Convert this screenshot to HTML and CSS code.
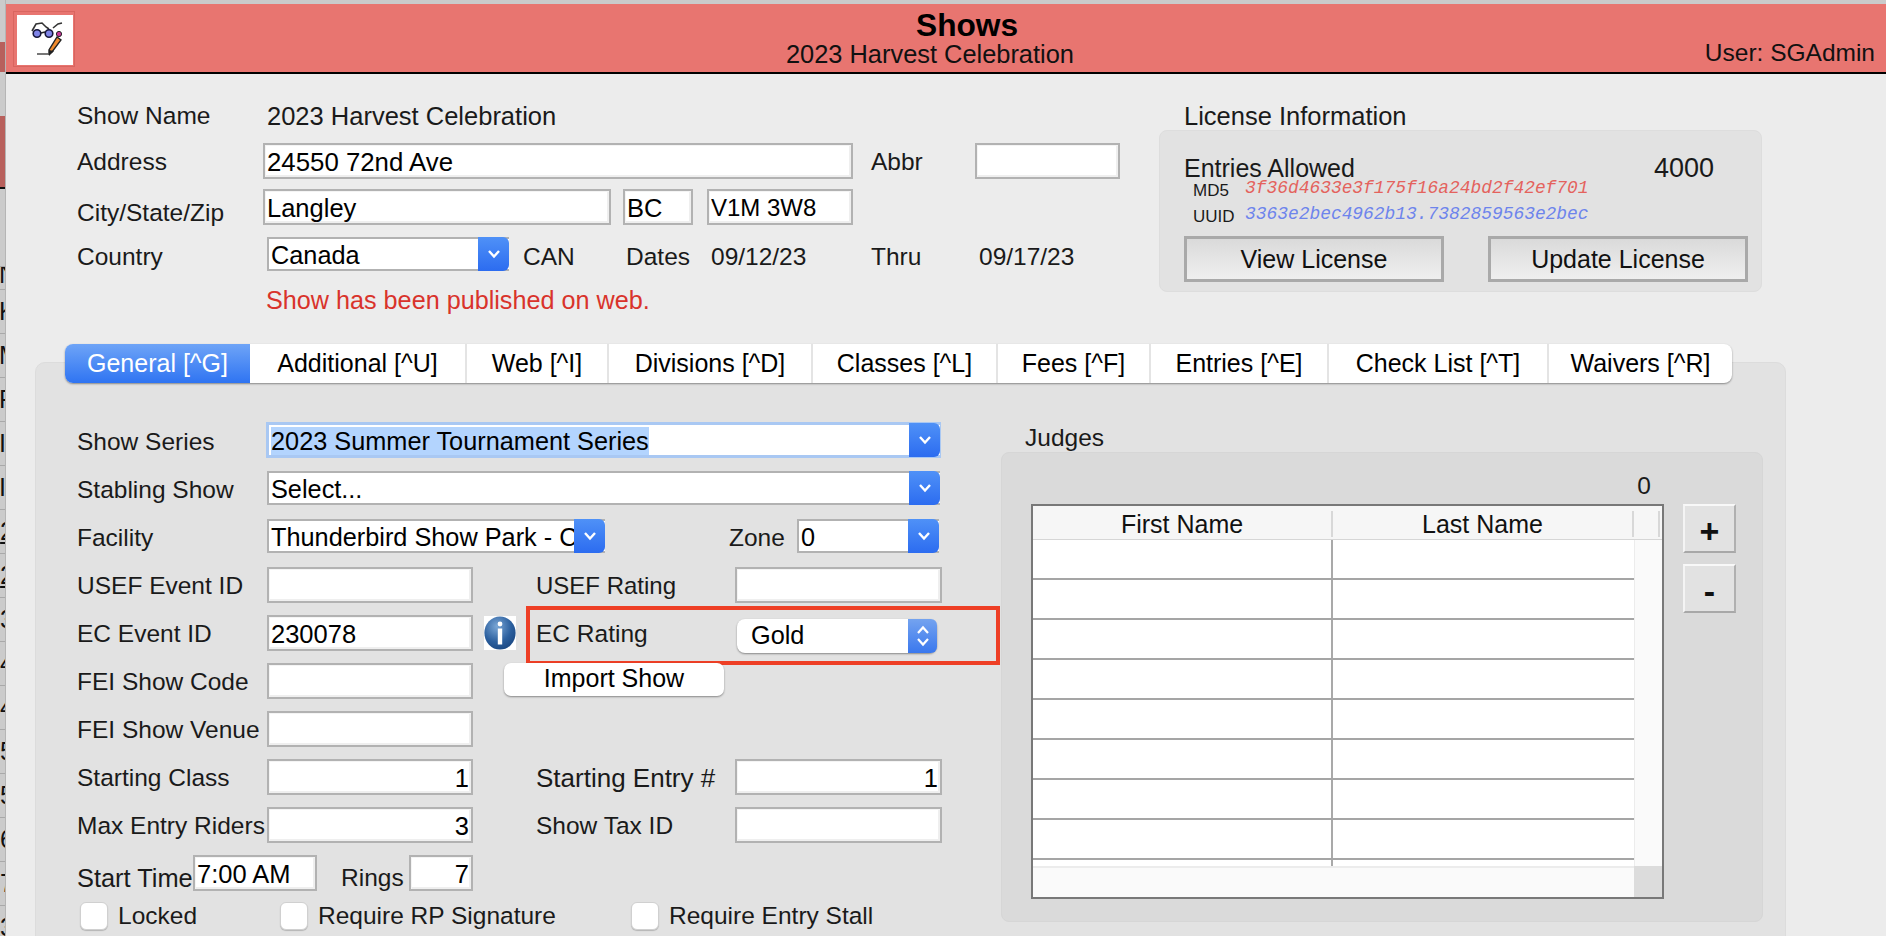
FILE: index.html
```html
<!DOCTYPE html>
<html>

<head>
    <meta charset="utf-8">
    <title>Shows</title>
    <link rel="stylesheet" href="styles.css">
</head>

<body>
    <!-- sliver of the spreadsheet window behind -->
    <div class="behind">
        <div class="behind-band band-a"></div>
        <div class="behind-band band-b"></div>
        <div class="behind-row first letter"><span>N</span></div>
        <div class="behind-row letter"><span>K</span></div>
        <div class="behind-row letter"><span>M</span></div>
        <div class="behind-row letter"><span>F</span></div>
        <div class="behind-row letter"><span>I</span></div>
        <div class="behind-row letter"><span>I</span></div>
        <div class="behind-row"><span class="under">2</span></div>
        <div class="behind-row"><span class="under">2</span></div>
        <div class="behind-row"><span>3</span></div>
        <div class="behind-row"><span>4</span></div>
        <div class="behind-row"><span>4</span></div>
        <div class="behind-row"><span>5</span></div>
        <div class="behind-row"><span>5</span></div>
        <div class="behind-row"><span>6</span></div>
        <div class="behind-row"><span>7</span></div>
        <div class="behind-row"><span>3</span></div>
    </div>

    <div class="window">
        <header class="header">
            <div class="logo-box">
                <svg class="logo" viewBox="0 0 56 50" width="56" height="50">
                    <path d="M15 16 L19 9 L25 8 L29 12 L32 14 M36 13 L41 9 L45 8" fill="none" stroke="#333" stroke-width="1.6" />
                    <path d="M24 18 L28 17" fill="none" stroke="#222" stroke-width="1.6" />
                    <circle cx="20" cy="18.5" r="3.8" fill="#7f84e8" stroke="#16163a" stroke-width="1.6" />
                    <circle cx="32" cy="18.5" r="3.8" fill="#7f84e8" stroke="#16163a" stroke-width="1.6" />
                    <circle cx="42" cy="19" r="2.6" fill="#c8389a" stroke="#222" stroke-width="1" />
                    <path d="M40 22 L44 25 L35 37 L32 39 L32 35 Z" fill="#f08a2c" stroke="#222" stroke-width="1.4" />
                    <path d="M32 35 L32 41 L37 36 Z" fill="#222" />
                    <path d="M20 39 L32 39" stroke="#555" stroke-width="1.6" />
                </svg>
            </div>
            <div class="titles">
                <div class="title">Shows</div>
                <div class="subtitle">2023 Harvest Celebration</div>
            </div>
            <div class="user">User: SGAdmin</div>
        </header>

        <div class="top">
            <div class="show-info">
                <div class="info-row">
                    <span class="info-label">Show Name</span>
                    <span class="show-name">2023 Harvest Celebration</span>
                </div>
                <div class="info-row">
                    <span class="info-label">Address</span>
                    <input class="field w-address" type="text" value="24550 72nd Ave">
                    <span class="abbr-label">Abbr</span>
                    <input class="field w-abbr" type="text">
                </div>
                <div class="info-row">
                    <span class="info-label low">City/State/Zip</span>
                    <input class="field w-city" type="text" value="Langley">
                    <input class="field w-state" type="text" value="BC">
                    <input class="field w-zip" type="text" value="V1M 3W8">
                </div>
                <div class="info-row country-row">
                    <span class="info-label">Country</span>
                    <div class="select w-country"><span class="select-text">Canada</span><span class="select-arrow"><svg width="14" height="10" viewBox="0 0 14 10"><path d="M2 2 L7 7.5 L12 2" fill="none" stroke="#fff" stroke-width="2.4" /></svg></span></div>
                    <span class="code">CAN</span>
                    <span class="dates-label">Dates</span>
                    <span class="date-from">09/12/23</span>
                    <span class="thru-label">Thru</span>
                    <span>09/17/23</span>
                </div>
                <div class="info-row published">Show has been published on web.</div>
            </div>

            <div class="license">
                <div class="license-title">License Information</div>
                <div class="license-box">
                    <div class="entries"><span>Entries Allowed</span><span class="entries-count">4000</span></div>
                    <div class="key-row md5"><span class="key-label">MD5</span><span class="key-value red">3f36d4633e3f175f16a24bd2f42ef701</span></div>
                    <div class="key-row uuid"><span class="key-label">UUID</span><span class="key-value blue">3363e2bec4962b13.7382859563e2bec</span></div>
                    <div class="license-buttons">
                        <button class="license-button">View License</button>
                        <button class="license-button">Update License</button>
                    </div>
                </div>
            </div>
        </div>

        <nav class="tabs">
            <div class="tab active t-general">General [^G]</div>
            <div class="tab t-additional">Additional [^U]</div>
            <div class="tab t-web">Web [^I]</div>
            <div class="tab t-divisions">Divisions [^D]</div>
            <div class="tab t-classes">Classes [^L]</div>
            <div class="tab t-fees">Fees [^F]</div>
            <div class="tab t-entries">Entries [^E]</div>
            <div class="tab t-check">Check List [^T]</div>
            <div class="tab t-waivers">Waivers [^R]</div>
        </nav>

        <section class="panel">
            <div class="general">
                <div class="row">
                    <label class="label">Show Series</label>
                    <div class="select focused span-rest"><span class="select-text"><span class="selected-text">2023 Summer Tournament Series</span></span><span class="select-arrow"><svg width="14" height="10" viewBox="0 0 14 10"><path d="M2 2 L7 7.5 L12 2" fill="none" stroke="#fff" stroke-width="2.4" /></svg></span></div>
                </div>
                <div class="row">
                    <label class="label">Stabling Show</label>
                    <div class="select span-rest"><span class="select-text">Select...</span><span class="select-arrow"><svg width="14" height="10" viewBox="0 0 14 10"><path d="M2 2 L7 7.5 L12 2" fill="none" stroke="#fff" stroke-width="2.4" /></svg></span></div>
                </div>
                <div class="row facility-row">
                    <label class="label">Facility</label>
                    <div class="select w-facility"><span class="select-text">Thunderbird Show Park - Campground</span><span class="select-arrow"><svg width="14" height="10" viewBox="0 0 14 10"><path d="M2 2 L7 7.5 L12 2" fill="none" stroke="#fff" stroke-width="2.4" /></svg></span></div>
                    <label class="label zone-label">Zone</label>
                    <div class="select w-zone"><span class="select-text">0</span><span class="select-arrow"><svg width="14" height="10" viewBox="0 0 14 10"><path d="M2 2 L7 7.5 L12 2" fill="none" stroke="#fff" stroke-width="2.4" /></svg></span></div>
                </div>
                <div class="row">
                    <label class="label">USEF Event ID</label>
                    <input class="field" type="text">
                    <label class="label col-b narrow">USEF Rating</label>
                    <input class="field w-right" type="text">
                </div>
                <div class="row">
                    <label class="label">EC Event ID</label>
                    <input class="field" type="text" value="230078">
                    <svg class="info-icon" viewBox="0 0 32 34" width="32" height="34">
                        <defs>
                            <radialGradient id="infoBall" cx="0.4" cy="0.3" r="0.85">
                                <stop offset="0" stop-color="#7ba7d6" />
                                <stop offset="0.55" stop-color="#2b5f9e" />
                                <stop offset="1" stop-color="#143f78" />
                            </radialGradient>
                        </defs>
                        <rect width="32" height="34" fill="#fff" />
                        <ellipse cx="16" cy="17" rx="15.6" ry="16.6" fill="url(#infoBall)" />
                        <circle cx="16" cy="8" r="2.4" fill="#fff" />
                        <rect x="13.8" y="12.5" width="4.4" height="16" fill="#fff" />
                    </svg>
                    <label class="label col-b ec-label">EC Rating</label>
                    <div class="select rounded w-rating"><span class="select-text">Gold</span><span class="select-arrow light"><svg width="16" height="24" viewBox="0 0 16 24"><path d="M3 9 L8 3.5 L13 9 M3 15 L8 20.5 L13 15" fill="none" stroke="#fff" stroke-width="2.2" /></svg></span></div>
                    <div class="highlight"></div>
                </div>
                <div class="row">
                    <label class="label">FEI Show Code</label>
                    <input class="field" type="text">
                    <button class="import-button">Import Show</button>
                </div>
                <div class="row">
                    <label class="label">FEI Show Venue</label>
                    <input class="field" type="text">
                </div>
                <div class="row">
                    <label class="label">Starting Class</label>
                    <input class="field num" type="text" value="1">
                    <label class="label col-b wide">Starting Entry #</label>
                    <input class="field num w-right" type="text" value="1">
                </div>
                <div class="row">
                    <label class="label">Max Entry Riders</label>
                    <input class="field num" type="text" value="3">
                    <label class="label col-b">Show Tax ID</label>
                    <input class="field w-right" type="text">
                </div>
                <div class="row time-row">
                    <label class="label time-label">Start Time</label>
                    <input class="field w-time" type="text" value="7:00 AM">
                    <label class="label rings-label">Rings</label>
                    <input class="field num w-rings" type="text" value="7">
                </div>
                <div class="check-row">
                    <label class="check c-locked"><input type="checkbox"> Locked</label>
                    <label class="check c-signature"><input type="checkbox"> Require RP Signature</label>
                    <label class="check"><input type="checkbox"> Require Entry Stall</label>
                </div>
            </div>

            <div class="judges">
                <div class="judges-title">Judges</div>
                <div class="judges-box">
                    <div class="judges-count">0</div>
                    <div class="judges-body">
                        <div class="table">
                            <div class="thead">
                                <div class="th">First Name</div>
                                <div class="th">Last Name</div>
                                <div class="th corner"></div>
                            </div>
                            <div class="tbody">
                                <div class="rows">
                                    <div class="tr"><div class="td"></div><div class="td"></div></div>
                                    <div class="tr"><div class="td"></div><div class="td"></div></div>
                                    <div class="tr"><div class="td"></div><div class="td"></div></div>
                                    <div class="tr"><div class="td"></div><div class="td"></div></div>
                                    <div class="tr"><div class="td"></div><div class="td"></div></div>
                                    <div class="tr"><div class="td"></div><div class="td"></div></div>
                                    <div class="tr"><div class="td"></div><div class="td"></div></div>
                                    <div class="tr"><div class="td"></div><div class="td"></div></div>
                                    <div class="tr part"><div class="td"></div><div class="td"></div></div>
                                </div>
                                <div class="vbar"></div>
                            </div>
                            <div class="tfoot">
                                <div class="hbar"></div>
                                <div class="scroll-corner"></div>
                            </div>
                        </div>
                        <div class="table-buttons">
                            <button class="bevel-button">+</button>
                            <button class="bevel-button">-</button>
                        </div>
                    </div>
                </div>
            </div>
        </section>
    </div>
</body>

</html>
```

FILE: styles.css
```css
* {
    box-sizing: border-box;
}

html,
body {
    height: 100%;
}

body {
    margin: 0;
    display: flex;
    height: 936px;
    overflow: hidden;
    font-family: "Liberation Sans", Arial, sans-serif;
    font-size: 24.5px;
    color: #1a1a1a;
    background-color: #cacaca;
}

/* window behind */
.behind {
    width: 6px;
    flex: none;
    overflow: hidden;
    border-right: 1px solid #b5b5b5;
    background-color: #cbcbcb;
    color: #111;
}

.behind-band {
    background-color: #b8605c;
}

.band-a {
    height: 30px;
    margin-top: 42px;
}

.band-b {
    height: 73px;
    margin-top: 44px;
    border-bottom: 2px solid #111;
}

.behind-row {
    height: 44px;
    display: flex;
    justify-content: flex-end;
    align-items: center;
    border-top: 1px solid #a9a9a9;
    font-size: 25px;
}

.behind-row.first {
    height: 23px;
    margin-top: 77px;
    align-items: flex-end;
    overflow: hidden;
}

.behind-row span {
    flex: none;
    margin-right: -9px;
}

.behind-row.letter {
    justify-content: flex-start;
}

.behind-row.letter span {
    margin: 0 0 0 -1px;
}

.behind-row .under {
    text-decoration: underline;
}

/* main window */
.window {
    flex: 1;
    min-width: 0;
    margin-top: 4px;
    background-color: #ececec;
}

.header {
    height: 70px;
    display: flex;
    background-color: #e87570;
    border-bottom: 2px solid #000;
    color: #111;
}

.logo-box {
    flex: none;
    width: 62px;
    height: 56px;
    margin: 7px 0 0 7px;
    padding: 3px;
    border: 1px solid #d9655f;
    background-color: #e87570;
}

.logo {
    display: block;
    background-color: #fff;
}

.titles {
    margin-left: 711px;
    line-height: 1;
    white-space: nowrap;
}

.title {
    margin: 6px 0 0 130px;
    font-size: 31.7px;
    font-weight: bold;
    color: #000;
}

.subtitle {
    margin-top: 0;
    font-size: 25.4px;
}

.user {
    margin-left: auto;
    margin-right: 11px;
    padding-top: 37px;
    font-size: 24.5px;
    line-height: 1;
}

/* show details and license */
.top {
    display: flex;
    height: 270px;
    padding: 18px 0 0 71px;
}

.show-info {
    width: 1083px;
}

.info-row {
    display: flex;
    align-items: center;
    height: 46px;
    white-space: nowrap;
}

.info-row > span {
    padding-top: 2px;
}

.info-row > .low {
    padding-top: 12px;
}

.country-row {
    margin-top: 1px;
}

.country-row > span {
    padding-top: 5px;
}

.info-label {
    flex: none;
    width: 186px;
}

.show-name {
    margin-left: 4px;
    font-size: 25.5px;
}

.abbr-label {
    width: 104px;
    margin-left: 18px;
}

.field {
    width: 206px;
    height: 36px;
    padding: 2px 2px 0;
    border: 2px solid #b2b2b2;
    border-radius: 0;
    outline: none;
    background-color: #fff;
    box-shadow: inset 1px 1px 0 #f4f4f4, inset -2px -2px 0 #efefef;
    font-family: inherit;
    font-size: 25.5px;
    color: #000;
}

.num {
    text-align: right;
}

.w-address {
    width: 590px;
    font-size: 25.8px;
}

.w-abbr {
    width: 145px;
}

.w-city {
    width: 348px;
}

.w-state {
    width: 70px;
    margin-left: 12px;
}

.w-zip {
    width: 146px;
    margin-left: 14px;
    font-size: 24px;
}

.select {
    position: relative;
    display: flex;
    height: 34px;
    border: 2px solid #b2b2b2;
    border-right: 0;
    background-color: #fff;
    font-size: 25.3px;
    color: #000;
}

.select-text {
    flex: 1;
    min-width: 0;
    padding-left: 2px;
    overflow: hidden;
    white-space: nowrap;
    line-height: 32px;
}

.select-arrow {
    flex: none;
    display: flex;
    align-items: center;
    justify-content: center;
    width: 31px;
    margin: -2px 0;
    border-radius: 0 6px 6px 0;
    background: linear-gradient(#4f91f7, #2c6cf0);
}

.select-arrow.light {
    width: 29px;
    background: linear-gradient(#74a3ef, #3a78ee);
}

.w-country {
    width: 242px;
    margin-left: 4px;
}

.code {
    margin-left: 14px;
    width: 103px;
}

.dates-label {
    width: 85px;
}

.date-from {
    width: 160px;
}

.thru-label {
    width: 108px;
}

.published {
    padding-left: 189px;
    font-size: 25.2px;
    color: #d9332b;
}

.license {
    width: 603px;
    margin-left: -1px;
    margin-top: -2px;
}

.license-title {
    height: 40px;
    padding-left: 25px;
    font-size: 25.5px;
    line-height: 52px;
}

.license-box {
    height: 162px;
    padding: 22px 13px 0 24px;
    border: 1px solid #dddddd;
    border-radius: 8px;
    background-color: #e2e2e2;
}

.entries {
    display: flex;
    font-size: 25px;
    line-height: 30px;
}

.entries-count {
    margin-left: 299px;
    font-size: 27px;
}

.key-row {
    display: flex;
    align-items: center;
    height: 26px;
    padding-left: 9px;
}

.md5 {
    margin-top: -8px;
}

.key-label {
    width: 52px;
    font-size: 17px;
    padding-top: 5px;
}

.key-value {
    font-family: "Liberation Mono", monospace;
    font-style: italic;
    font-size: 17.9px;
}

.red {
    color: #e4625d;
}

.blue {
    color: #6d84ec;
}

.license-buttons {
    display: flex;
    justify-content: space-between;
    margin-top: 9px;
}

.license-button {
    width: 260px;
    height: 46px;
    border: 3px solid #a9a9a9;
    background: linear-gradient(#dadada, #efefef);
    font-family: inherit;
    font-size: 25px;
    color: #111;
}

/* tab bar */
.tabs {
    position: relative;
    z-index: 1;
    display: flex;
    width: 1667px;
    height: 39px;
    margin-left: 59px;
    border-radius: 8px;
    background-color: #fff;
    box-shadow: 0 1px 2px rgba(0, 0, 0, 0.4);
    font-size: 25px;
}

.tab {
    display: flex;
    align-items: center;
    justify-content: center;
    border-left: 2px solid #e4e4e4;
    white-space: nowrap;
    color: #000;
}

.tab.active {
    border: 0;
    border-radius: 8px 0 0 8px;
    background: linear-gradient(#6ea4f7, #2f74f2);
    color: #fff;
}

.t-general { width: 185px; }
.t-additional { width: 215px; border-left: 0; }
.t-web { width: 142px; }
.t-divisions { width: 204px; }
.t-classes { width: 185px; }
.t-fees { width: 153px; }
.t-entries { width: 178px; }
.t-check { width: 220px; }
.t-waivers { width: 185px; }

/* tab panel */
.panel {
    display: flex;
    width: 1751px;
    height: 600px;
    margin: -21px 0 0 29px;
    padding: 53px 0 0 41px;
    border: 1px solid #dcdcdc;
    border-radius: 10px;
    background-color: #e2e2e2;
}

.general {
    flex: none;
    width: 924px;
}

.row {
    position: relative;
    display: grid;
    grid-template-columns: 190px 206px 63px 199px 208px;
    align-items: start;
    height: 48px;
    padding-top: 7px;
    white-space: nowrap;
}

.label {
    line-height: 38px;
}

.narrow {
    font-size: 24px;
}

.wide {
    font-size: 26px;
}

.span-rest {
    grid-column: 2 / 6;
    width: 673px;
}

.focused {
    border-color: #a9c8f3;
    box-shadow: 0 0 0 1px #a9c8f3;
}

.selected-text {
    background-color: #b3d4fe;
}

.facility-row {
    display: flex;
}

.facility-row .label:first-child {
    width: 190px;
}

.w-facility {
    width: 338px;
}

.zone-label {
    width: 68px;
    margin-left: 124px;
}

.w-zone {
    width: 142px;
}

.col-b {
    grid-column: 4;
}

.w-right {
    width: 207px;
}

.info-icon {
    grid-column: 3;
    grid-row: 1;
    margin: 1px 0 0 11px;
}

.ec-label {
    grid-row: 1;
}

.rounded {
    grid-column: 5;
    grid-row: 1;
    margin: 4px 0 0 2px;
    border: 0;
    border-radius: 8px;
    box-shadow: 0 1px 2px rgba(0, 0, 0, 0.4);
}

.rounded .select-text {
    padding-left: 14px;
}

.rounded .select-arrow {
    margin: 0;
}

.w-rating {
    width: 200px;
}

/* red box drawn over the screenshot */
.highlight {
    position: absolute;
    left: 449px;
    top: -2px;
    width: 474px;
    height: 59px;
    border: 4px solid #ee3f25;
    pointer-events: none;
}

.import-button {
    grid-column: 3 / 6;
    width: 220px;
    height: 33px;
    margin-left: 31px;
    padding: 0 0 2px 0;
    border: 0;
    border-radius: 7px;
    background-color: #fff;
    box-shadow: 0 1px 2px rgba(0, 0, 0, 0.4);
    font-family: inherit;
    font-size: 25px;
    color: #000;
    line-height: 1;
}

.time-row {
    display: flex;
}

.time-label {
    width: 116px;
    padding-top: 4px;
    font-size: 25.4px;
}

.w-time {
    width: 124px;
}

.rings-label {
    width: 68px;
    margin-left: 24px;
    padding-top: 4px;
}

.w-rings {
    width: 64px;
}

.check-row {
    display: flex;
    padding: 6px 0 0 3px;
}

.check {
    display: flex;
    align-items: center;
    height: 28px;
    white-space: nowrap;
}

.check input {
    appearance: none;
    width: 28px;
    height: 28px;
    margin: 0 10px 0 0;
    border: 1px solid #d0d0d0;
    border-radius: 6px;
    background-color: #fff;
    box-shadow: 0 1px 1px rgba(0, 0, 0, 0.2);
}

.c-locked {
    width: 200px;
}

.c-signature {
    width: 351px;
}

/* judges */
.judges {
    flex: none;
    width: 762px;
}

.judges-title {
    height: 36px;
    padding: 11px 0 0 24px;
    line-height: 22px;
}

.judges-box {
    width: 762px;
    height: 470px;
    padding: 22px 0 0 29px;
    border-radius: 8px;
    border: 1px solid #d6d6d6;
    background-color: #dadada;
}

.judges-count {
    width: 620px;
    height: 29px;
    text-align: right;
    line-height: 22px;
}

.judges-body {
    display: flex;
}

.table {
    display: flex;
    flex-direction: column;
    width: 633px;
    height: 395px;
    border: 2px solid #787878;
    background-color: #fff;
}

.thead {
    display: flex;
    flex: none;
    height: 34px;
    align-items: center;
    padding-top: 2px;
    border-bottom: 1px solid #d6d6d6;
    background-color: #f6f6f6;
    color: #111;
    font-size: 25px;
}

.th {
    width: 300px;
    height: 26px;
    text-align: center;
    line-height: 26px;
    border-right: 2px solid #d8d8d8;
}

.th + .th {
    width: 301px;
}

.th.corner {
    width: 26px;
}

.tbody {
    display: flex;
    flex: 1;
    min-height: 0;
}

.rows {
    flex: none;
    width: 601px;
    overflow: hidden;
}

.tr {
    display: flex;
    height: 40px;
    border-bottom: 2px solid #a5a5a5;
}

.tr.part {
    height: 9px;
    border-bottom: 0;
}

.td {
    width: 300px;
    border-right: 2px solid #a9a9a9;
}

.td + .td {
    width: 301px;
    border-right: 0;
}

.vbar {
    flex: 1;
    border-left: 1px solid #ececec;
    background-color: #fafafa;
}

.tfoot {
    display: flex;
    flex: none;
    height: 31px;
}

.hbar {
    width: 601px;
    border-top: 2px solid #ececec;
    background-color: #fafafa;
}

.scroll-corner {
    flex: 1;
    background-color: #dcdcdc;
}

.table-buttons {
    display: flex;
    flex-direction: column;
    gap: 11px;
    margin-left: 19px;
}

.bevel-button {
    width: 53px;
    height: 49px;
    padding: 4px 0 0;
    border: 2px solid;
    border-color: #f8f8f8 #b0b0b0 #a8a8a8 #f4f4f4;
    background-color: #e2e2e2;
    font-family: inherit;
    font-size: 34px;
    font-weight: bold;
    line-height: 1;
    color: #111;
}
```
